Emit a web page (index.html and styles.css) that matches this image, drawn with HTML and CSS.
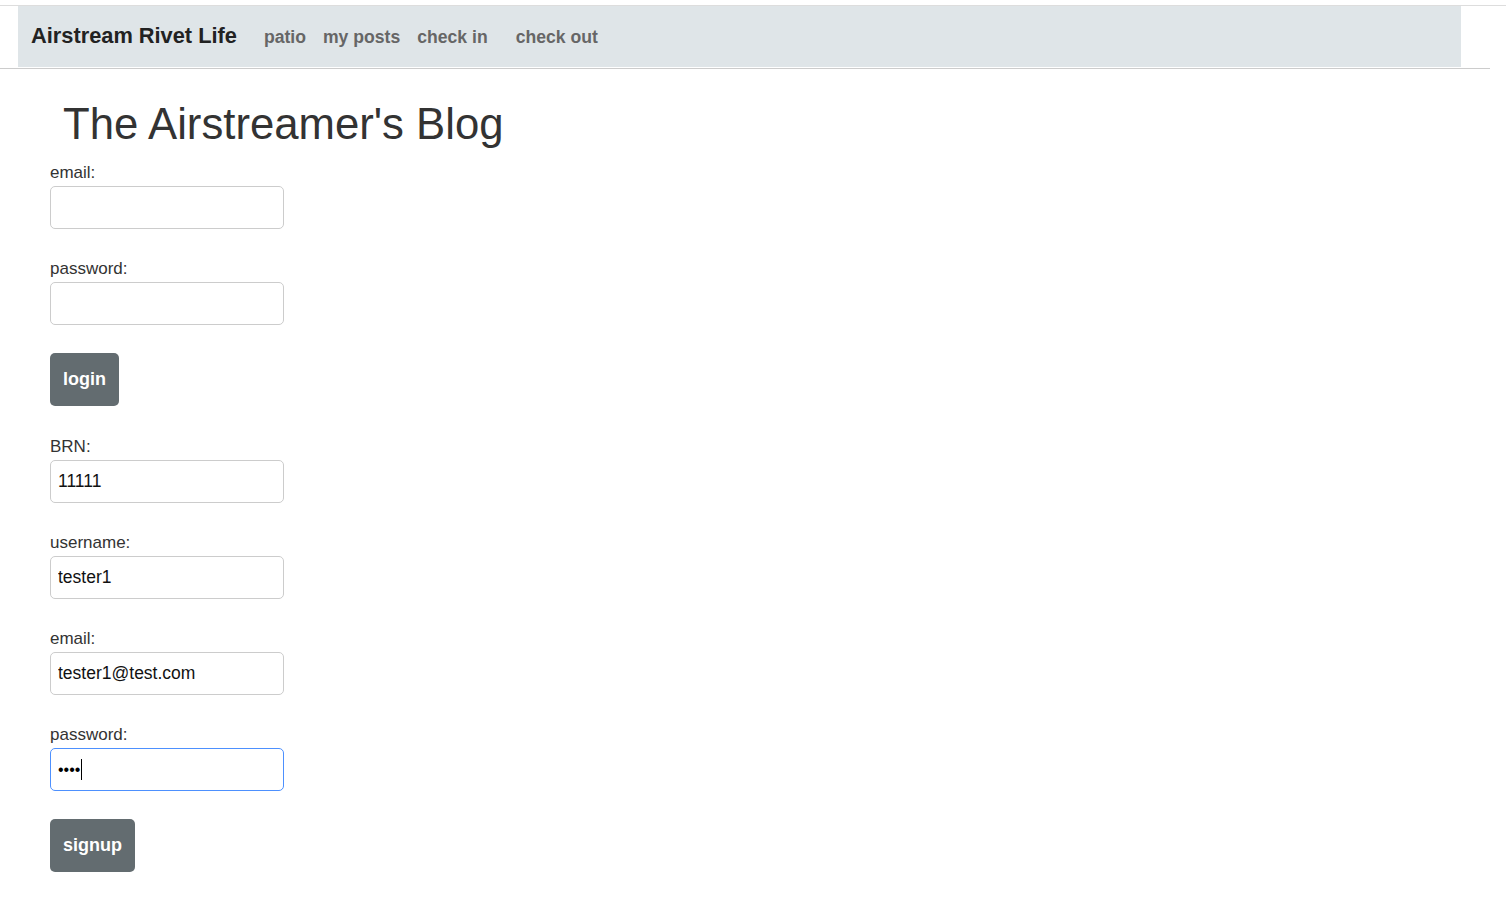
FILE: index.html
```html
<!DOCTYPE html>
<html>
<head>
<meta charset="utf-8">
<link rel="stylesheet" href="styles.css">
</head>
<body>
<header class="topbar">
  <nav class="navbar">
    <div class="navbar-inner">
      <a class="brand" href="#">Airstream Rivet Life</a>
      <ul class="nav-links">
        <li><a href="#">patio</a></li>
        <li><a href="#">my posts</a></li>
        <li><a href="#">check in</a></li>
        <li class="gap"><a href="#">check out</a></li>
      </ul>
    </div>
  </nav>
</header>
<main class="content">
  <h1 class="title">The Airstreamer's Blog</h1>
  <form class="form">
    <div class="field">
      <label>email:</label>
      <input class="input" type="text">
    </div>
    <div class="field">
      <label>password:</label>
      <input class="input" type="password">
    </div>
    <div class="actions">
      <button class="btn" type="button">login</button>
    </div>
  </form>
  <form class="form">
    <div class="field">
      <label>BRN:</label>
      <input class="input" type="text" value="11111">
    </div>
    <div class="field">
      <label>username:</label>
      <input class="input" type="text" value="tester1">
    </div>
    <div class="field">
      <label>email:</label>
      <input class="input" type="text" value="tester1@test.com">
    </div>
    <div class="field">
      <label>password:</label>
      <div class="input focused"><span class="dots">••••</span><span class="caret"></span></div>
    </div>
    <div class="actions">
      <button class="btn" type="button">signup</button>
    </div>
  </form>
</main>
</body>
</html>
```
FILE: styles.css
```css
html, body {
  margin: 0;
  padding: 0;
  background: #fff;
  font-family: "Liberation Sans", Arial, sans-serif;
  color: #333;
}
.topbar {
  padding-top: 5px;
}
.navbar {
  border-top: 1px solid #ddd;
  width: 1506px;
}
.navbar-inner {
  margin-left: 18px;
  width: 1443px;
  height: 61px;
  background: #dfe5e8;
  display: flex;
  align-items: center;
  position: relative;
}
.navbar-inner::after {
  content: "";
  position: absolute;
  left: -18px;
  top: 62px;
  width: 1490px;
  height: 1px;
  background: #ccc;
}
.brand {
  margin-left: 13px;
  font-size: 21.8px;
  font-weight: bold;
  color: #222;
  text-decoration: none;
  margin-top: -2px;
}
.nav-links {
  list-style: none;
  display: flex;
  margin: 1px 0 0 27px;
  padding: 0;
}
.nav-links li {
  margin-right: 17px;
}
.nav-links li.gap {
  margin-left: 11px;
}
.nav-links a {
  font-size: 17.6px;
  font-weight: bold;
  color: #666;
  text-decoration: none;
}
.content {
  padding: 0 0 0 50px;
}
.title {
  margin: 31px 0 14px 13px;
  font-size: 43.7px;
  font-weight: normal;
  line-height: 52px;
  color: #333;
}
.form {
  display: flex;
  flex-direction: column;
}
.field {
  display: flex;
  flex-direction: column;
  gap: 4px;
  margin-bottom: 31px;
}
label {
  font-size: 17px;
  line-height: 18px;
  color: #333;
}
.input {
  box-sizing: border-box;
  width: 234px;
  height: 43px;
  border: 1px solid #ccc;
  border-radius: 5px;
  padding: 0 7px;
  font-family: "Liberation Sans", Arial, sans-serif;
  font-size: 17.5px;
  color: #111;
  background: #fff;
  outline: none;
  margin: 0;
}
.input.focused {
  border-color: #4d90fe;
  display: flex;
  align-items: center;
}
.dots {
  font-size: 16px;
  color: #000;
}
.caret {
  display: inline-block;
  width: 1px;
  height: 21px;
  background: #000;
  margin-left: 1px;
}
.actions {
  margin-top: -3px;
  margin-bottom: 32px;
}
.btn {
  height: 53px;
  padding: 0 13px;
  border: none;
  border-radius: 5px;
  background: #636c70;
  color: #fff;
  font-family: "Liberation Sans", Arial, sans-serif;
  font-size: 18px;
  font-weight: bold;
}
```
